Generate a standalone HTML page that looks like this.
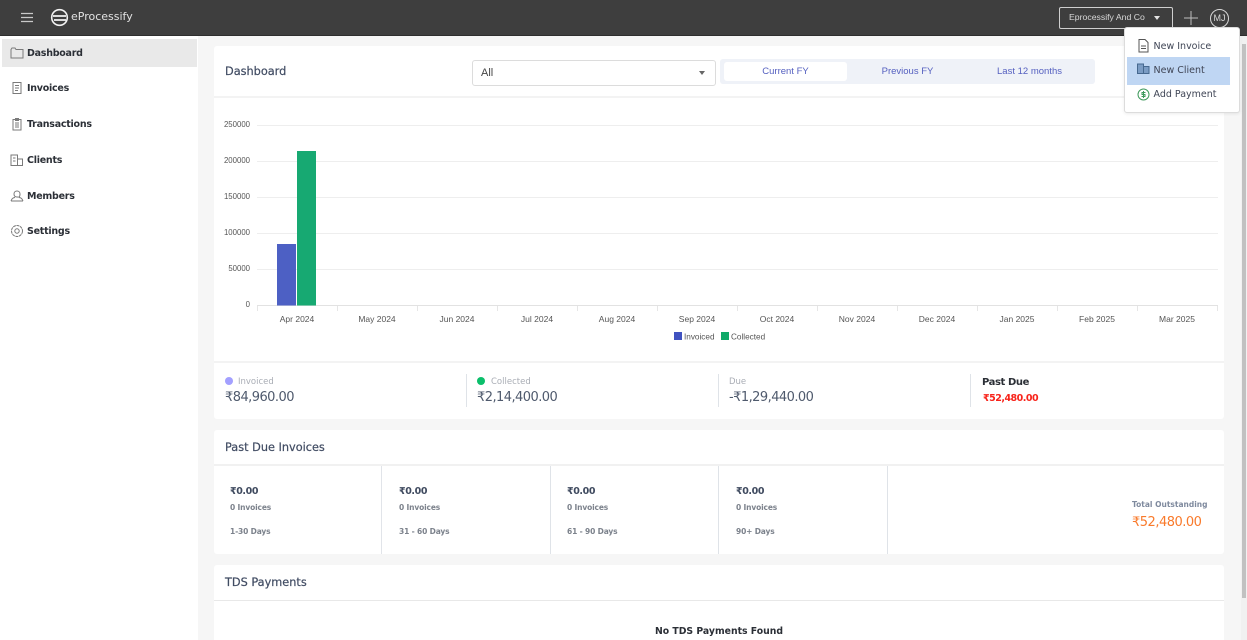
<!DOCTYPE html>
<html><head><meta charset="utf-8">
<style>
html,body{margin:0;padding:0;width:1247px;height:640px;overflow:hidden}
body{position:relative;background:#f6f6f6;font-family:"DejaVu Sans",sans-serif;color:#3f4a5f}
#w{position:absolute;left:0;top:0;width:1247px;height:640px;overflow:hidden}
.a{position:absolute;white-space:nowrap}
.card{position:absolute;background:#fff;border-radius:3px}
.nav{position:absolute;left:27px;font-size:9.500px;font-weight:700;color:#2b2f36;line-height:14px;letter-spacing:-.25px}
.ic{position:absolute;left:10px;width:14px;height:14px;fill:none;stroke:#7a7a7a;stroke-width:1}
.l{font-family:"Liberation Sans",sans-serif}
.amt{font-size:13px;color:#4f5a6d;line-height:16px;letter-spacing:-.55px}
.sm{font-size:8.500px;color:#a9adb5;line-height:12px}
.h{font-size:11.300px;color:#414c63;line-height:16px;font-weight:400;-webkit-text-stroke:.2px #414c63}
.v{position:absolute;width:1px;background:#dfe3e8}
.z{font-size:9.500px;font-weight:700;color:#3f4a5f;line-height:13px;letter-spacing:-.4px}
.i{font-size:7.500px;font-weight:700;color:#7c828c;line-height:11px;letter-spacing:-.15px}
.mi{position:absolute;left:28.500px;font-size:9.500px;color:#3f4555;line-height:14px}
</style></head><body><div id="w">

<div class="a" style="left:0;top:0;width:1247px;height:35px;background:#3e3e3e;border-bottom:1px solid #2e2e2e"></div>
<svg class="a" style="left:20px;top:11px" width="14" height="13" stroke="#c9c9c9" stroke-width="1.2"><path d="M1 2.500H13M1 6.500H13M1 10.500H13"/></svg>
<svg class="a" style="left:50px;top:8px" width="20" height="20" fill="none" stroke="#f2f2f2" stroke-width="1.600"><circle cx="9.500" cy="9.500" r="7.800"/><path d="M3 8H16M4 12H16" stroke-width="1.800"/></svg>
<div class="a" style="left:71px;top:9px;font-size:11px;line-height:16px;color:#e2e2e2">eProcessify</div>

<div class="a" style="left:1059px;top:7px;width:112px;height:20px;border:1px solid #cfcfcf;border-radius:2px"></div>
<div class="a l" style="left:1069px;top:11px;font-size:8.700px;line-height:12px;color:#d8d8d8">Eprocessify And Co</div>
<div class="a" style="left:1154px;top:16px;border:3.500px solid transparent;border-top:4px solid #e4e4e4;border-bottom:0"></div>
<svg class="a" style="left:1184px;top:11px" width="14" height="14" stroke="#bdbdbd"><path d="M7 0V14M0 7H14"/></svg>
<div class="a l" style="left:1210px;top:9px;width:17px;height:17px;border:1px solid #d8d8d8;border-radius:50%;color:#d8d8d8;font-size:9px;line-height:17px;text-align:center">MJ</div>

<div class="a" style="left:0;top:36px;width:198px;height:604px;background:#fff"></div>
<div class="a" style="left:2px;top:39px;width:195px;height:28px;background:#e9e9e9"></div>

<svg class="ic" style="top:46px" viewBox="0 0 14 14"><path d="M1 3.500V12H13V3.500H6L5 2H2Z"/></svg>
<div class="nav" style="top:47px">Dashboard</div>
<svg class="ic" style="top:81px" viewBox="0 0 14 14"><path d="M3 1.500H11V12.500H3ZM5 4.500H9M5 7H9M5 9.500H8"/></svg>
<div class="nav" style="top:82px">Invoices</div>
<svg class="ic" style="top:117px" viewBox="0 0 14 14"><path d="M3 2.500H11V13H3ZM5.500 1.500H8.500V3.500H5.500ZM5 6H9M5 8H9M5 10H9"/></svg>
<div class="nav" style="top:118px">Transactions</div>
<svg class="ic" style="top:153px" viewBox="0 0 14 14"><path d="M1 12.500V2H7.500V12.500ZM7.500 6H12.500V12.500H7.500ZM3 5H5.500M3 8H5.500"/></svg>
<div class="nav" style="top:154px">Clients</div>
<svg class="ic" style="top:189px" viewBox="0 0 14 14"><path d="M4 5C4 1 10 1 10 5S8 8 7 8 4 8 4 5ZM1 12C2 9 4 8.500 5 8.500M13 12C12 9 10 8.500 9 8.500M1 12H13"/></svg>
<div class="nav" style="top:190px">Members</div>
<svg class="ic" style="top:224px" viewBox="0 0 14 14"><circle cx="7" cy="7" r="5.500" stroke-dasharray="3 .6"/><circle cx="7" cy="7" r="2.200"/></svg>
<div class="nav" style="top:225px">Settings</div>

<div class="card" style="left:214px;top:46px;width:1010px;height:373px"></div>
<div class="a" style="left:214px;top:96px;width:1010px;height:2px;background:#f3f3f3"></div>
<div class="a" style="left:214px;top:361px;width:1010px;height:2px;background:#f3f3f3"></div>
<div class="a h" style="left:225px;top:64px">Dashboard</div>

<div class="a" style="left:472px;top:60px;width:242px;height:24px;background:#fff;border:1px solid #dcdcdc;border-radius:3px"></div>
<div class="a l" style="left:481px;top:66px;font-size:11px;line-height:14px;color:#444">All</div>
<div class="a" style="left:699px;top:71px;border:3.500px solid transparent;border-top:4px solid #666;border-bottom:0"></div>
<div class="a" style="left:720px;top:59px;width:375px;height:25px;background:#eff2f8;border-radius:3px"></div>
<div class="a" style="left:724px;top:62px;width:123px;height:19px;background:#fff;border-radius:3px"></div>
<div class="a l" style="left:724px;top:66px;width:123px;text-align:center;font-size:9.500px;line-height:12px;color:#5560c0">Current FY</div>
<div class="a l" style="left:846px;top:66px;width:123px;text-align:center;font-size:9.500px;line-height:12px;color:#5560c0">Previous FY</div>
<div class="a l" style="left:968px;top:66px;width:123px;text-align:center;font-size:9.500px;line-height:12px;color:#5560c0">Last 12 months</div>

<svg class="a" style="left:214px;top:110px" width="1010" height="240" font-family="Liberation Sans" font-size="8.500" fill="#555">
<g stroke="#eeeeee"><path d="M43 15.500H1004M43 51.500H1004M43 87.500H1004M43 123.500H1004M43 159.500H1004"/></g>
<path d="M43 195.500H1004" stroke="#e2e2e2"/>
<path d="M43.500 196V201M123.500 196V201M203.500 196V201M283.500 196V201M363.500 196V201M443.500 196V201M523.500 196V201M603.500 196V201M683.500 196V201M763.500 196V201M843.500 196V201M923.500 196V201M1003.500 196V201" stroke="#e6e6e6"/>
<g text-anchor="end" font-size="7.800"><text x="36" y="17">250000</text><text x="36" y="53">200000</text><text x="36" y="89">150000</text><text x="36" y="125">100000</text><text x="36" y="161">50000</text><text x="36" y="197">0</text></g>
<rect x="63" y="134" width="19" height="61.500" fill="#4d60c4"/>
<rect x="83" y="41" width="19" height="154.500" fill="#17a972"/>
<g text-anchor="middle"><text x="83" y="212">Apr 2024</text><text x="163" y="212">May 2024</text><text x="243" y="212">Jun 2024</text><text x="323" y="212">Jul 2024</text><text x="403" y="212">Aug 2024</text><text x="483" y="212">Sep 2024</text><text x="563" y="212">Oct 2024</text><text x="643" y="212">Nov 2024</text><text x="723" y="212">Dec 2024</text><text x="803" y="212">Jan 2025</text><text x="883" y="212">Feb 2025</text><text x="963" y="212">Mar 2025</text></g>
<rect x="460" y="222" width="8" height="8" fill="#4052c0"/><text x="470" y="229.500" font-size="8.200">Invoiced</text>
<rect x="507" y="222" width="8" height="8" fill="#0fa968"/><text x="517" y="229.500" font-size="8.200">Collected</text>
</svg>

<div class="a" style="left:225px;top:377px;width:8px;height:8px;border-radius:50%;background:#a3a0ff"></div>
<div class="a sm" style="left:238px;top:376px">Invoiced</div>
<div class="a amt" style="left:225px;top:390px">₹84,960.00</div>
<div class="v" style="left:466px;top:374px;height:33px"></div>
<div class="a" style="left:477px;top:377px;width:8px;height:8px;border-radius:50%;background:#0bbf6b"></div>
<div class="a sm" style="left:491px;top:376px">Collected</div>
<div class="a amt" style="left:477px;top:390px">₹2,14,400.00</div>
<div class="v" style="left:718px;top:374px;height:33px"></div>
<div class="a sm" style="left:729px;top:376px">Due</div>
<div class="a amt" style="left:729px;top:390px">-₹1,29,440.00</div>
<div class="v" style="left:970px;top:374px;height:33px"></div>
<div class="a" style="left:982px;top:376px;font-size:10px;font-weight:700;line-height:14px;color:#2b2f36;letter-spacing:-.4px">Past Due</div>
<div class="a" style="left:983px;top:392px;font-size:9.500px;font-weight:700;line-height:14px;color:#f8231a;letter-spacing:-.5px">₹52,480.00</div>

<div class="card" style="left:214px;top:430px;width:1010px;height:124px"></div>
<div class="a" style="left:214px;top:464px;width:1010px;height:2px;background:#f1f1f1"></div>
<div class="a h" style="left:225px;top:440px">Past Due Invoices</div>
<div class="v" style="left:381px;top:466px;height:88px;background:#e1e4e9"></div>
<div class="v" style="left:550px;top:466px;height:88px;background:#dfe3e8"></div>
<div class="v" style="left:718px;top:466px;height:88px;background:#dfe3e8"></div>
<div class="v" style="left:887px;top:466px;height:88px;background:#dfe3e8"></div>

<div class="a z" style="left:230px;top:485px">₹0.00</div><div class="a i" style="left:230px;top:502px">0 Invoices</div><div class="a i" style="left:230px;top:526px">1-30 Days</div>
<div class="a z" style="left:399px;top:485px">₹0.00</div><div class="a i" style="left:399px;top:502px">0 Invoices</div><div class="a i" style="left:399px;top:526px">31 - 60 Days</div>
<div class="a z" style="left:567px;top:485px">₹0.00</div><div class="a i" style="left:567px;top:502px">0 Invoices</div><div class="a i" style="left:567px;top:526px">61 - 90 Days</div>
<div class="a z" style="left:736px;top:485px">₹0.00</div><div class="a i" style="left:736px;top:502px">0 Invoices</div><div class="a i" style="left:736px;top:526px">90+ Days</div>
<div class="a i" style="left:1132px;top:499px;color:#7f8a9e;letter-spacing:0">Total Outstanding</div>
<div class="a" style="left:1132px;top:515px;font-size:13px;line-height:16px;color:#f97a2b;letter-spacing:-.5px">₹52,480.00</div>

<div class="card" style="left:214px;top:565px;width:1010px;height:75px;border-radius:3px 3px 0 0"></div>
<div class="a" style="left:214px;top:600px;width:1010px;height:1px;background:#e8e8e8"></div>
<div class="a h" style="left:225px;top:575px">TDS Payments</div>
<div class="a" style="left:214px;top:624px;width:1010px;text-align:center;font-size:9.300px;font-weight:700;line-height:15px;color:#2b2f36">No TDS Payments Found</div>

<div class="a" style="left:1241px;top:36px;width:6px;height:604px;background:#f1f1f1"></div>
<div class="a" style="left:1242px;top:44px;width:4px;height:554px;background:#c1c1c1"></div>

<div class="a" style="left:1124px;top:27px;width:114px;height:84px;background:#fff;border:1px solid #dcdcdc;border-radius:3px;box-shadow:0 1px 3px rgba(0,0,0,.08)">
<svg class="a" style="left:13px;top:11px" width="11" height="14" fill="none" stroke="#555"><path d="M1 .5H7L10 3.500V13H1ZM3 7H8M3 9.500H8"/></svg>
<div class="mi" style="top:12px">New Invoice</div>
<div class="a" style="left:2px;top:29px;width:103px;height:28px;background:#bfd6f3"></div>
<svg class="a" style="left:12px;top:35px" width="13" height="12" fill="#7b9cc4" stroke="#46688f"><path d="M.5 10.500V1H6.500V10.500ZM6.500 3.500H12V10.500H6.500Z"/></svg>
<div class="mi" style="top:36px">New Client</div>
<svg class="a" style="left:12px;top:60px" width="13" height="13" fill="none" stroke="#3f9a5c"><circle cx="6.500" cy="6.500" r="5.500"/><path d="M8.500 4.500H5V6.500H8V8.500H4.500M6.500 3V10"/></svg>
<div class="mi" style="top:60px">Add Payment</div>
</div>
</div></body></html>
